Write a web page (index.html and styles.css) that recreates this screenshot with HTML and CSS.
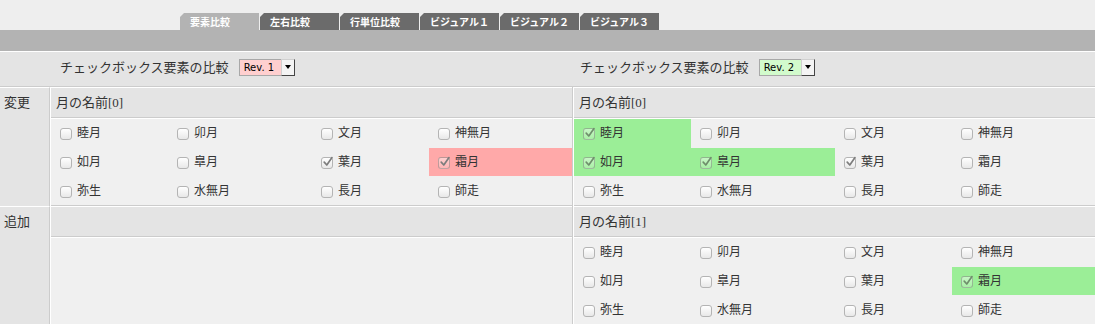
FILE: index.html
```html
<!DOCTYPE html>
<html lang="ja">
<head>
<meta charset="utf-8">
<title>要素比較</title>
<link rel="stylesheet" href="styles.css">
</head>
<body>
<div class="tabs">
  <div class="tab active">要素比較</div>
  <div class="tab">左右比較</div>
  <div class="tab">行単位比較</div>
  <div class="tab">ビジュアル１</div>
  <div class="tab">ビジュアル２</div>
  <div class="tab">ビジュアル３</div>
</div>
<div class="band"></div>

<div class="title-row">
  <div></div>
  <div class="title-cell left">チェックボックス要素の比較
    <span class="sel"><span class="sel-v rev1">Rev. 1</span><span class="sel-b"><i class="tri"></i></span></span>
  </div>
  <div class="title-cell right">チェックボックス要素の比較
    <span class="sel"><span class="sel-v rev2">Rev. 2</span><span class="sel-b"><i class="tri"></i></span></span>
  </div>
</div>

<div class="sect">
  <div class="lbl">変更</div>
  <div class="panel">
    <div class="phead">月の名前[0]</div>
    <div class="grid">
      <div class="c"><span class="cb"></span>睦月</div>
      <div class="c"><span class="cb"></span>卯月</div>
      <div class="c"><span class="cb"></span>文月</div>
      <div class="c"><span class="cb"></span>神無月</div>
      <div class="c"><span class="cb"></span>如月</div>
      <div class="c"><span class="cb"></span>皐月</div>
      <div class="c"><span class="cb on"><svg viewBox="0 0 12 12"><path d="M2.2 6.2 L4.8 9 L10 1.6"/></svg></span>葉月</div>
      <div class="c pink"><span class="cb on"><svg viewBox="0 0 12 12"><path d="M2.2 6.2 L4.8 9 L10 1.6"/></svg></span>霜月</div>
      <div class="c"><span class="cb"></span>弥生</div>
      <div class="c"><span class="cb"></span>水無月</div>
      <div class="c"><span class="cb"></span>長月</div>
      <div class="c"><span class="cb"></span>師走</div>
    </div>
  </div>
  <div class="panel">
    <div class="phead">月の名前[0]</div>
    <div class="grid">
      <div class="c green"><span class="cb on"><svg viewBox="0 0 12 12"><path d="M2.2 6.2 L4.8 9 L10 1.6"/></svg></span>睦月</div>
      <div class="c"><span class="cb"></span>卯月</div>
      <div class="c"><span class="cb"></span>文月</div>
      <div class="c"><span class="cb"></span>神無月</div>
      <div class="c green"><span class="cb on"><svg viewBox="0 0 12 12"><path d="M2.2 6.2 L4.8 9 L10 1.6"/></svg></span>如月</div>
      <div class="c green"><span class="cb on"><svg viewBox="0 0 12 12"><path d="M2.2 6.2 L4.8 9 L10 1.6"/></svg></span>皐月</div>
      <div class="c"><span class="cb on"><svg viewBox="0 0 12 12"><path d="M2.2 6.2 L4.8 9 L10 1.6"/></svg></span>葉月</div>
      <div class="c"><span class="cb"></span>霜月</div>
      <div class="c"><span class="cb"></span>弥生</div>
      <div class="c"><span class="cb"></span>水無月</div>
      <div class="c"><span class="cb"></span>長月</div>
      <div class="c"><span class="cb"></span>師走</div>
    </div>
  </div>
</div>

<div class="sect">
  <div class="lbl">追加</div>
  <div class="panel">
    <div class="phead"></div>
    <div class="grid"></div>
  </div>
  <div class="panel">
    <div class="phead">月の名前[1]</div>
    <div class="grid">
      <div class="c"><span class="cb"></span>睦月</div>
      <div class="c"><span class="cb"></span>卯月</div>
      <div class="c"><span class="cb"></span>文月</div>
      <div class="c"><span class="cb"></span>神無月</div>
      <div class="c"><span class="cb"></span>如月</div>
      <div class="c"><span class="cb"></span>皐月</div>
      <div class="c"><span class="cb"></span>葉月</div>
      <div class="c green"><span class="cb on"><svg viewBox="0 0 12 12"><path d="M2.2 6.2 L4.8 9 L10 1.6"/></svg></span>霜月</div>
      <div class="c"><span class="cb"></span>弥生</div>
      <div class="c"><span class="cb"></span>水無月</div>
      <div class="c"><span class="cb"></span>長月</div>
      <div class="c"><span class="cb"></span>師走</div>
    </div>
  </div>
</div>
</body>
</html>
```

FILE: styles.css
```css
html, body {
  margin: 0;
  padding: 0;
}
body {
  background: #eeeeee;
  width: 1095px;
  height: 324px;
  overflow: hidden;
  font-family: "Liberation Serif", "Noto Sans CJK JP", serif;
  color: #333;
}

.tabs {
  display: flex;
  padding: 13px 0 0 180px;
  height: 17px;
}
.tab {
  width: 79px;
  height: 17px;
  margin-right: 1px;
  box-sizing: border-box;
  padding-left: 10px;
  background: #6b6b6b;
  color: #fff;
  font: bold 10px/17px "Noto Sans CJK JP", sans-serif;
  clip-path: polygon(4px 0, 100% 0, 100% 100%, 0 100%, 0 4px);
}
.tab.active {
  background: #b3b3b3;
}
.band {
  height: 21px;
  background: #b3b3b3;
}

.title-row {
  display: grid;
  grid-template-columns: 51px 523px 1fr;
  height: 34px;
  border-top: 1px solid #fff;
  border-bottom: 1px solid #ccc;
  background: #e4e4e4;
  font-size: 13px;
}
.title-cell {
  display: flex;
  align-items: center;
  padding-bottom: 6px;
}
.title-cell.left { padding-left: 9px; }
.title-cell.right { padding-left: 6px; }

.sel {
  display: inline-flex;
  height: 17px;
  margin-left: 10px;
  margin-top: 2px;
  font: 10px/15px "DejaVu Sans", sans-serif;
  color: #000;
}
.sel-v {
  border: 1px solid #a8a8a8;
  border-right: none;
  padding: 0 7px 0 4px;
}
.rev1 { background: #ffcfcf; }
.rev2 { background: #d2fbcc; }
.sel-b {
  width: 12px;
  border: 1px solid;
  border-color: #d0d0d0 #444 #444 #d0d0d0;
  background: #f4f4f4;
  display: flex;
  align-items: center;
  justify-content: center;
}
.tri {
  width: 0;
  height: 0;
  border-left: 3px solid transparent;
  border-right: 3px solid transparent;
  border-top: 4px solid #000;
}

.sect {
  display: grid;
  grid-template-columns: 50px 523px 523px;
}
.lbl {
  background: #e4e4e4;
  border-top: 1px solid #fff;
  border-right: 1px solid #ccc;
  font-size: 13px;
  padding: 4px 0 0 4px;
}
.panel {
  border-left: 1px solid #fff;
  border-right: 1px solid #ccc;
}
.phead {
  height: 31px;
  box-sizing: border-box;
  border-top: 1px solid #fff;
  border-bottom: 1px solid #ccc;
  background: #e4e4e4;
  padding: 0 0 3px 5px;
  display: flex;
  align-items: center;
  font-size: 13px;
}
.grid {
  height: 88px;
  box-sizing: border-box;
  border-top: 1px solid #fff;
  border-bottom: 1px solid #ccc;
  background: #f0f0f0;
  display: grid;
  grid-template-columns: 117px 144px 117px 143px;
  grid-template-rows: repeat(3, 1fr);
}
.c {
  display: flex;
  align-items: center;
  padding: 0 0 3px 9px;
  font-size: 12px;
  font-family: "Noto Sans CJK JP", sans-serif;
}
.pink { background: #ffa9a9; }
.green { background: #9bee97; }

.cb {
  flex: none;
  position: relative;
  width: 12px;
  height: 12px;
  box-sizing: border-box;
  margin: 5px 5px 0 0;
  border: 1px solid #b4b4b4;
  border-radius: 3px;
  background: linear-gradient(#ffffff, #e8e8e8);
}
.pink .cb, .green .cb {
  background: linear-gradient(rgba(255,255,255,0.45), rgba(255,255,255,0.15));
  border-color: rgba(110,110,110,0.45);
}
.cb svg {
  position: absolute;
  left: 0;
  top: -2px;
  width: 12px;
  height: 12px;
  overflow: visible;
}
.cb svg path {
  fill: none;
  stroke: #7d7d7d;
  stroke-width: 1.7;
  stroke-linecap: round;
  stroke-linejoin: round;
}
.green .cb svg path { stroke: #6f8f6c; }
```
